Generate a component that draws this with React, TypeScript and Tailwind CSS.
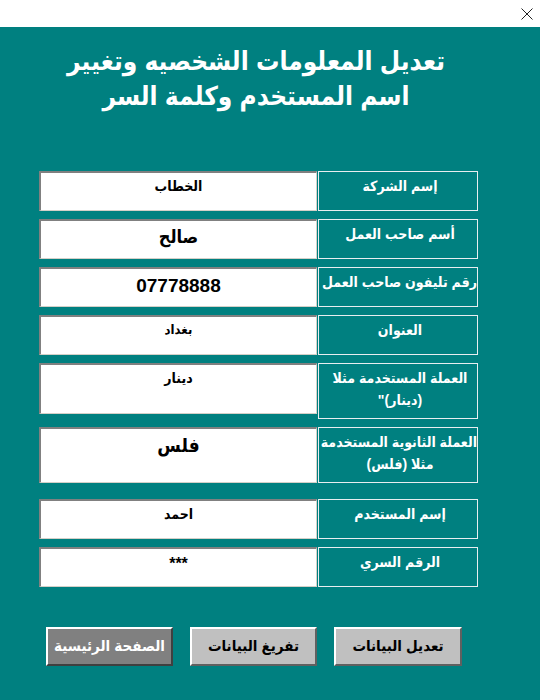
const font = { fontFamily: '"Liberation Sans", "DejaVu Sans Condensed", "DejaVu Sans", Arial, sans-serif' };

type Row = {
  label: string[];
  value: string;
  valueClass: string;
  inputH: string;
  labelH: string;
  mt: string;
};

const rows: Row[] = [
  { label: ['إسم الشركة'], value: 'الخطاب', valueClass: 'text-[14px]', inputH: 'h-[40px]', labelH: 'h-[40px]', mt: 'mt-0' },
  { label: ['أسم صاحب العمل'], value: 'صالح', valueClass: 'text-[18px]', inputH: 'h-[40px]', labelH: 'h-[40px]', mt: 'mt-[8px]' },
  { label: ['رقم تليفون صاحب العمل'], value: '07778888', valueClass: 'text-[19px]', inputH: 'h-[40px]', labelH: 'h-[40px]', mt: 'mt-[8px]' },
  { label: ['العنوان'], value: 'بغداد', valueClass: 'text-[13px]', inputH: 'h-[40px]', labelH: 'h-[40px]', mt: 'mt-[8px]' },
  { label: ['العملة المستخدمة مثلا', '(دينار)"'], value: 'دينار', valueClass: 'text-[14px]', inputH: 'h-[51px]', labelH: 'h-[56px]', mt: 'mt-[8px]' },
  { label: ['العملة الثانوية المستخدمة', 'مثلا (فلس)'], value: 'فلس', valueClass: 'text-[19px]', inputH: 'h-[56px]', labelH: 'h-[56px]', mt: 'mt-[8px]' },
  { label: ['إسم المستخدم'], value: 'احمد', valueClass: 'text-[14px]', inputH: 'h-[40px]', labelH: 'h-[40px]', mt: 'mt-[16px]' },
  { label: ['الرقم السري'], value: '***', valueClass: 'text-[16px]', inputH: 'h-[40px]', labelH: 'h-[40px]', mt: 'mt-[8px]' },
];

const btn = 'h-[39px] font-bold text-[15px] whitespace-nowrap border-2 border-t-white border-l-white';

export default function App() {
  return (
    <div className="w-[540px] h-[700px] bg-[#008080] flex flex-col" style={font}>
      {/* Title bar */}
      <div className="h-[27px] bg-white flex justify-end items-center pr-[6px] shrink-0">
        <svg width="12" height="12" viewBox="0 0 12 12" className="mr-[1px]">
          <path d="M0.5 0.5 L11.5 11.5 M11.5 0.5 L0.5 11.5" stroke="#222" strokeWidth="1" />
        </svg>
      </div>

      {/* Heading */}
      <div dir="rtl" className="text-white font-bold text-[26px] leading-[35px] text-center pt-[17px] pr-[28px]">
        <div>تعديل المعلومات الشخصيه وتغيير</div>
        <div>اسم المستخدم وكلمة السر</div>
      </div>

      {/* Form rows */}
      <div className="mt-[57px] pl-[39px] flex flex-col">
        {rows.map((r, i) => (
          <div key={i} className={`flex items-start ${r.mt}`}>
            <div
              dir="rtl"
              className={`w-[278px] ${r.inputH} bg-white border-t-2 border-l-2 border-b border-r border-t-[#808080] border-l-[#808080] border-b-[#d4d0c8] border-r-[#d4d0c8] text-center text-black font-bold pt-[5px] leading-tight ${r.valueClass}`}
            >
              {r.value}
            </div>
            <div
              dir="rtl"
              className={`ml-[1px] w-[160px] ${r.labelH} border border-[#e8eef0] text-white font-bold text-[14px] leading-[22px] text-center pt-[3px] pl-[4px]`}
            >
              {r.label.map((l, j) => (
                <div key={j} className="whitespace-nowrap">{l}</div>
              ))}
            </div>
          </div>
        ))}
      </div>

      {/* Buttons */}
      <div className="mt-[40px] pl-[46px] flex gap-[17px]">
        <button className={`${btn} w-[127px] bg-[#808080] text-white border-b-[#404040] border-r-[#404040]`}>
          الصفحة الرئيسية
        </button>
        <button className={`${btn} w-[127px] bg-[#c0c0c0] text-black border-b-[#606060] border-r-[#606060]`}>
          تفريغ البيانات
        </button>
        <button className={`${btn} w-[128px] bg-[#c0c0c0] text-black border-b-[#606060] border-r-[#606060]`}>
          تعديل البيانات
        </button>
      </div>
    </div>
  );
}
